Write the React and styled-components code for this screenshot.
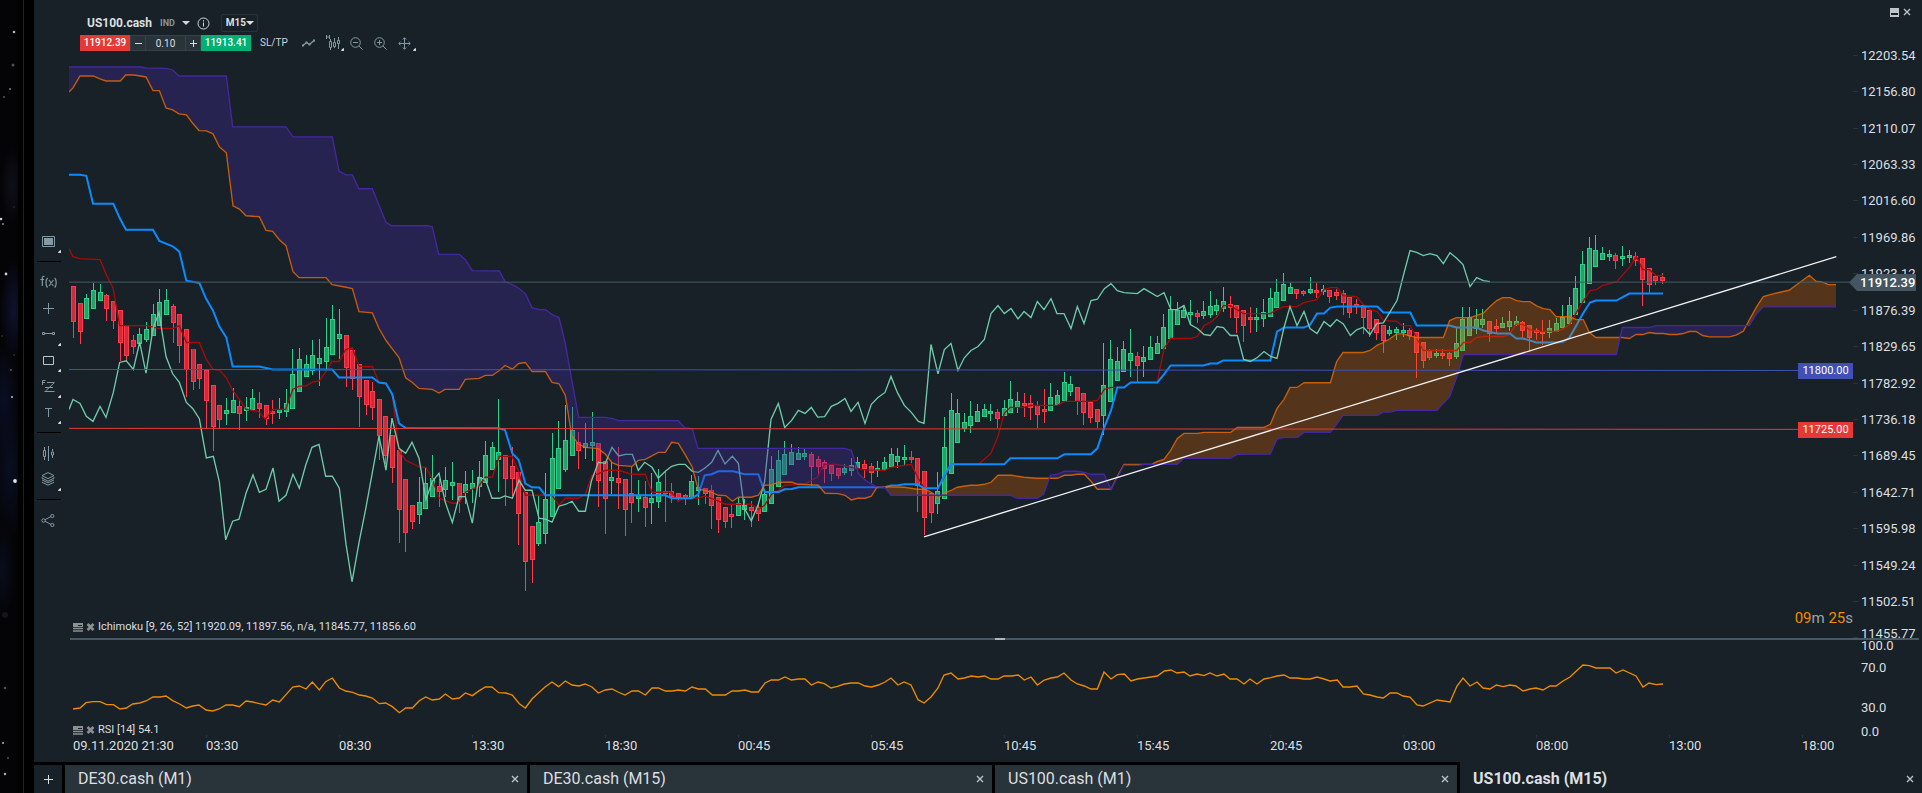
import React, { useState } from 'react'
import styled, { createGlobalStyle, css } from 'styled-components'

const colors = {
  panel: '#182127',
  tab: '#29333a',
  line: '#455a64',
  icon: '#8499a4',
  text: '#dcdfe1',
  red: '#e53935',
  green: '#00b074',
  blue: '#3f51b5',
  orange: '#ef8b00',
  up: '#2dcf8a',
  upFill: '#26a269',
  down: '#ff3b4b',
  downFill: '#cf2b3c',
  spanA: '#ef6c00',
  spanB: '#4527a0',
}

const GlobalStyle = createGlobalStyle`
  *, *::before, *::after {
    box-sizing: border-box;
  }
  body {
    margin: 0;
    background: #000;
    color: ${colors.text};
    font-family: Roboto, 'Liberation Sans', sans-serif;
    font-size: 13px;
    overflow: hidden;
  }
  button, input, select {
    font-family: inherit;
    margin: 0;
    padding: 0;
    border: 0;
    border-radius: 0;
    background: none;
    color: inherit;
  }
  button {
    cursor: pointer;
  }
  svg {
    display: block;
  }
`

/* ---------- chart data ---------- */

// Chart units: three per pixel, the x of the first bar is 219.
const LEFT = 207
const WIDTH = 5352
const PRICE_TOP = -480
const PRICE_HEIGHT = 1737
const RSI_HEIGHT = 294
const BARS_PER_LABEL = 399

// direction, high, body top, body bottom, low
const candles = `
d 198 198 306 356|d 250 250 336 374|u 222 234 297 297|u 189 210 267 267|u 192 216 243 243|d 222 225 267 305
d 243 243 303 329|d 270 270 369 425|d 315 315 411 425|d 345 360 381 404|u 324 342 372 372|u 306 327 360 366
u 252 282 348 348|u 207 246 318 318|u 207 240 285 285|d 252 258 309 369|d 282 282 378 430|d 327 327 453 533
d 387 387 489 513|d 435 435 480 510|d 453 453 546 628|d 498 498 624 696|d 558 558 603 628|u 537 573 585 617
u 507 543 582 582|d 543 561 585 633|u 534 564 576 605|u 510 537 573 573|d 519 552 570 597|d 558 558 600 617
d 543 576 585 614|u 537 570 582 600|u 510 552 579 594|u 390 465 570 570|u 384 420 519 519|u 408 435 474 474
u 360 408 456 468|u 357 417 435 500|u 294 381 429 456|u 255 297 408 408|u 267 342 357 420|d 345 345 447 504
d 393 393 480 513|d 435 435 534 624|d 483 483 558 588|d 489 516 567 602|d 540 540 651 723|d 591 591 711 735
d 648 648 747 792|d 693 693 873 971|d 780 780 942 998|d 858 858 909 930|u 774 849 888 915|u 746 792 870 870
u 708 777 834 834|d 780 801 819 864|u 744 783 813 833|u 729 789 801 842|d 792 792 843 882|u 756 795 822 855
u 753 792 810 852|u 726 774 804 834|u 666 708 792 792|u 669 684 753 753|u 540 699 723 819|d 708 708 780 860
d 684 741 780 831|d 759 759 885 978|d 819 819 1029 1116|d 921 921 1023 1092|u 828 909 975 981|u 762 840 945 975
u 642 717 894 894|u 606 687 810 810|u 558 663 753 758|u 564 633 711 711|d 639 669 696 750|u 612 672 687 720
u 579 669 681 726|d 672 672 786 864|d 726 726 840 945|u 729 774 786 825|d 684 777 792 870|d 780 780 873 951
d 744 822 852 912|u 783 828 840 879|d 786 834 867 924|u 762 837 852 915|u 750 789 849 866|d 759 816 825 909
d 792 816 834 852|d 822 822 837 849|d 825 828 837 858|u 768 786 837 837|u 771 804 816 858|d 807 807 825 855
d 798 813 861 930|d 834 834 903 942|d 864 864 909 927|d 858 885 894 927|u 837 852 891 891|u 840 858 873 903
d 846 864 876 924|d 852 864 885 906|u 810 825 879 879|u 711 750 855 855|u 693 723 804 804|u 666 705 768 768
u 675 699 738 738|u 684 702 723 723|u 687 702 714 723|d 699 705 744 801|d 711 720 744 771|d 723 729 750 792
d 738 738 765 786|d 747 747 771 780|u 735 747 762 768|u 717 738 756 771|u 714 729 750 750|d 723 735 750 777
d 732 741 762 792|u 726 747 756 774|u 714 729 753 753|u 687 705 744 744|u 687 711 729 747|u 678 714 723 738
d 696 714 723 732|d 717 717 801 879|d 756 756 897 948|d 822 822 882 912|u 759 816 855 885|u 594 684 840 840
u 522 573 765 765|u 540 582 672 672|u 582 609 630 639|u 546 591 621 642|u 555 576 609 609|u 555 570 594 594
u 555 576 585 606|d 570 579 600 627|u 543 567 591 591|u 486 540 582 582|u 519 546 564 582|d 522 552 561 594
d 528 552 567 603|d 546 558 588 627|d 510 570 579 612|u 492 534 576 576|u 513 528 558 558|u 459 489 546 546
u 471 495 519 531|d 504 504 549 588|d 522 522 582 618|d 549 549 597 612|d 570 570 609 627|u 369 498 591 648
u 360 420 549 549|u 381 426 486 486|u 363 390 459 459|u 327 402 426 474|d 399 411 441 489|u 378 414 429 474
u 348 381 423 423|u 348 369 405 405|u 282 321 390 390|u 228 267 357 357|u 246 270 315 315|u 255 270 294 294
u 240 276 285 315|d 270 279 291 309|u 243 273 288 297|u 213 258 285 294|u 237 255 273 285|u 201 243 267 276
d 228 252 264 294|d 255 255 294 340|d 270 270 318 366|d 261 291 300 340|u 264 291 300 336|u 237 276 297 321
u 204 234 291 291|u 177 216 264 264|u 159 192 243 243|u 189 201 222 222|d 207 207 222 237|d 210 213 222 228
u 171 207 219 222|d 189 210 219 234|u 195 207 216 225|d 210 210 231 249|d 207 216 228 240|d 210 219 249 285
d 231 231 279 294|d 237 252 261 282|d 255 255 294 342|d 270 270 327 351|d 297 297 339 360|d 315 315 363 402
u 318 330 342 348|u 321 327 339 360|u 309 330 339 351|d 324 330 348 360|d 336 336 402 477|d 366 366 426 447
d 387 393 417 423|u 387 402 411 417|d 390 402 411 420|d 399 402 420 441|u 324 369 414 420|u 261 297 396 396
u 261 291 348 348|u 267 297 327 342|u 267 297 315 324|d 303 303 342 366|d 297 318 327 339|u 291 309 324 324
u 273 303 321 333|u 288 303 315 318|d 303 306 333 354|d 315 315 354 399|d 324 330 339 360|d 300 333 342 375
u 300 324 339 354|u 294 309 336 336|u 255 291 324 324|u 231 255 312 312|u 168 204 285 285|u 93 132 249 249
u 51 84 192 192|u 45 90 141 141|u 81 99 120 120|u 90 102 111 123|d 99 105 123 147|u 78 108 117 138
u 90 105 114 129|d 96 108 123 138|d 114 114 180 258|d 144 144 195 219|d 165 168 183 195|d 159 171 183 192
`
  .trim()
  .split(/[|\n]/)
  .map((row, i) => {
    const [dir, ...rest] = row.split(' ')
    const [high, top, bottom, low] = rest.map(Number)
    return { dir, high, top, bottom, low, x: Math.round(73 + 6.648 * i) * 3 }
  })

const spanA =
  '207,-384 219,-396 240,-432 280,-432 300,-423 318,-417 361,-417 377,-435 402,-435 438,-429 459,-388 478,-388 498,-336 518,-330 537,-318 559,-315 578,-290 597,-268 619,-267 639,-258 658,-219 679,-201 699,-42 718,-32 738,-12 778,-9 798,32 818,35 838,60 858,78 879,156 897,174 978,174 996,195 1038,203 1057,207 1077,276 1117,280 1137,327 1158,363 1177,388 1197,414 1217,475 1237,489 1257,507 1297,510 1317,521 1335,510 1378,510 1396,480 1438,477 1456,468 1477,468 1498,453 1515,438 1537,449 1556,432 1576,429 1596,456 1636,456 1656,489 1677,493 1696,528 1715,648 1736,675 1756,684 1795,688 1816,704 1836,730 1856,738 1897,741 1915,723 1936,720 1975,699 1996,699 2015,669 2035,672 2055,705 2077,744 2094,810 2114,813 2135,819 2155,828 2177,829 2197,846 2215,834 2254,834 2275,828 2294,798 2315,797 2336,789 2375,789 2395,795 2455,798 2475,822 2515,823 2535,828 2554,842 2573,837 2596,837 2614,831 2632,802 2713,804 2752,810 2773,810 2794,819 2814,837 2833,822 2854,813 2872,804 2911,798 2932,798 2953,795 2973,789 2994,768 3035,768 3072,774 3112,777 3172,777 3193,768 3213,768 3232,765 3253,765 3273,786 3292,810 3333,810 3352,771 3372,735 3455,735 3472,726 3492,720 3512,693 3532,657 3552,642 3592,642 3612,639 3692,639 3712,624 3792,624 3811,615 3831,567 3852,540 3870,504 3891,504 3912,490 3991,490 4010,426 4029,399 4090,399 4110,393 4132,377 4150,369 4171,357 4190,343 4211,343 4230,350 4250,354 4330,354 4349,303 4369,294 4410,294 4450,281 4470,261 4490,243 4508,234 4530,234 4550,243 4569,246 4590,246 4610,259 4630,267 4650,270 4668,291 4709,291 4729,300 4750,300 4768,339 4788,354 4867,354 4888,357 4908,345 4928,345 4948,339 4968,342 4990,342 5008,345 5030,345 5050,342 5068,336 5088,336 5108,348 5128,352 5188,352 5208,347 5230,335 5250,297 5270,261 5290,231 5310,225 5340,218 5367,212 5397,190 5428,167 5448,185 5466,187 5485,195 5508,195'

const spanB =
  '207,-459 423,-459 438,-456 500,-455 518,-450 537,-432 679,-432 698,-279 858,-279 879,-249 997,-249 1017,-146 1038,-135 1057,-135 1077,-93 1117,-93 1158,8 1175,18 1282,18 1297,21 1316,104 1378,104 1396,120 1417,153 1498,154 1515,186 1537,195 1556,206 1576,222 1596,264 1618,270 1636,270 1657,285 1677,294 1696,372 1715,480 1736,594 1816,594 1836,597 1856,604 2035,604 2055,626 2077,628 2094,687 2533,687 2554,693 2575,762 2596,783 2628,802 2654,804 2673,828 3030,828 3052,837 3112,837 3131,825 3151,768 3172,765 3193,756 3232,756 3253,759 3273,765 3312,765 3333,810 3372,738 3415,738 3433,735 3532,735 3552,717 3692,717 3712,705 3811,704 3831,660 3853,654 3893,654 3912,639 3991,639 4010,615 4029,588 4132,588 4150,578 4171,578 4190,573 4311,573 4349,531 4370,474 4390,405 4849,405 4867,324 4948,324 4968,318 5248,318 5268,285 5290,262 5508,262'

const kijun =
  '207,-135 240,-135 259,-132 279,-48 340,-48 359,-5 378,30 459,30 478,64 518,80 538,96 559,183 598,190 618,237 639,273 658,321 679,354 698,441 778,441 818,450 996,450 1017,474 1117,474 1137,489 1158,492 1177,525 1197,612 1217,626 1496,627 1515,632 1537,702 1556,722 1576,793 1596,804 1618,805 1636,828 1996,828 2015,837 2075,837 2095,825 2114,768 2135,765 2155,756 2200,756 2233,765 2275,765 2294,818 2336,818 2354,810 2375,809 2395,804 2655,804 2673,799 2695,798 2713,795 2752,795 2773,807 2814,807 2833,768 2854,735 3013,735 3031,717 3172,717 3193,705 3273,705 3292,687 3313,624 3333,573 3352,504 3372,504 3392,489 3472,489 3492,465 3512,438 3610,438 3631,432 3652,432 3670,423 3811,423 3831,336 3852,324 3912,324 3931,315 3951,282 3972,282 3991,264 4012,261 4132,261 4150,279 4231,279 4250,318 4349,318 4370,324 4429,324 4450,333 4490,342 4530,342 4549,357 4569,357 4609,369 4670,369 4690,366 4708,355 4729,318 4749,282 4770,249 4788,243 4849,243 4888,222 4989,222'

const tenkan =
  '207,87 219,111 240,117 300,120 320,168 339,204 359,318 440,318 478,327 518,327 538,318 559,369 598,369 619,420 639,450 658,452 679,475 698,513 718,540 738,570 775,576 797,600 818,570 857,570 878,510 898,500 917,500 937,488 958,484 978,456 996,426 1017,426 1037,390 1057,385 1077,440 1117,441 1137,489 1158,492 1177,525 1197,693 1217,723 1257,743 1278,744 1297,780 1317,837 1357,852 1378,852 1396,819 1436,801 1456,774 1477,774 1498,711 1536,711 1556,756 1576,828 1656,828 1677,858 1696,837 1736,837 1756,825 1776,768 1795,764 1816,753 1856,753 1895,765 1936,765 1956,819 2015,819 2035,846 2055,835 2095,837 2114,830 2155,846 2177,855 2254,855 2275,870 2294,858 2315,825 2336,813 2354,798 2413,795 2452,774 2473,735 2512,735 2554,744 2596,752 2655,753 2673,744 2734,735 2753,774 2773,807 2814,807 2854,735 2935,735 2953,720 2973,702 2994,651 3013,582 3031,564 3073,564 3091,558 3172,558 3193,546 3273,546 3292,543 3313,510 3333,504 3372,504 3392,489 3472,489 3492,387 3512,357 3572,357 3592,351 3612,318 3631,309 3652,291 3670,258 3691,258 3730,282 3811,282 3831,270 3852,261 3891,261 3912,249 3951,240 3972,210 3991,204 4012,204 4030,228 4070,231 4090,255 4111,270 4132,276 4150,303 4189,305 4208,318 4231,318 4249,354 4270,393 4370,393 4390,369 4410,369 4429,354 4450,351 4510,351 4528,345 4549,313 4570,315 4588,330 4609,335 4670,336 4690,328 4709,315 4729,279 4749,246 4770,213 4789,210 4807,198 4850,186 4888,144 4909,111 4928,150 4948,150 4969,168 4989,168'

const chikou =
  '207,570 219,540 240,552 259,591 279,606 300,561 318,594 340,519 359,429 379,424 400,450 419,368 438,461 459,327 477,279 498,411 518,463 538,489 559,549 578,567 598,598 619,716 640,711 658,788 677,962 698,906 717,900 738,822 759,767 778,819 798,810 819,746 837,846 858,828 879,765 898,807 917,738 936,684 957,675 977,771 997,771 1018,807 1038,975 1056,1088 1078,965 1097,870 1117,760 1137,650 1158,753 1176,596 1197,687 1217,702 1236,669 1257,717 1278,840 1297,786 1317,762 1336,850 1357,910 1377,832 1396,832 1417,912 1436,774 1456,780 1476,837 1498,837 1515,830 1537,837 1557,783 1576,813 1596,813 1617,897 1636,900 1656,909 1677,861 1698,855 1716,846 1736,876 1756,876 1774,786 1795,729 1816,732 1836,684 1856,710 1876,705 1897,705 1915,753 1934,729 1956,744 1975,777 1996,756 2015,741 2035,735 2055,735 2077,756 2095,759 2114,747 2135,729 2154,693 2175,734 2197,711 2215,732 2233,867 2254,905 2275,855 2294,786 2313,600 2335,552 2354,624 2375,603 2395,573 2415,582 2434,564 2453,593 2474,592 2494,561 2514,552 2535,537 2553,576 2574,549 2595,612 2614,555 2634,534 2655,519 2673,471 2692,519 2713,558 2734,579 2755,606 2772,612 2793,375 2814,463 2833,390 2853,372 2874,453 2893,415 2913,393 2934,381 2953,360 2973,282 2994,258 3013,282 3033,267 3054,298 3072,276 3093,294 3112,246 3132,270 3153,237 3171,282 3192,282 3213,327 3232,261 3252,312 3273,243 3292,239 3313,207 3333,192 3352,213 3372,219 3412,222 3432,207 3472,231 3492,219 3513,270 3531,270 3552,258 3571,315 3592,327 3612,345 3631,348 3651,321 3670,324 3691,348 3712,348 3731,420 3751,426 3772,414 3792,396 3812,411 3831,417 3852,324 3870,261 3891,318 3912,276 3930,327 3951,342 3972,306 3991,321 4010,300 4030,313 4051,348 4070,331 4090,323 4110,345 4130,312 4150,310 4191,243 4210,168 4230,93 4250,98 4270,108 4290,102 4311,108 4330,132 4350,99 4370,116 4389,135 4410,201 4430,174 4450,183 4470,186'

const rsi =
  '219,207 240,204 258,188 279,185 300,185 320,194 340,194 360,207 379,204 398,192 419,189 438,183 459,171 480,171 498,168 518,182 539,192 559,204 578,198 597,195 618,210 638,213 657,207 678,195 698,195 718,200 738,183 758,186 778,191 798,195 818,180 838,186 858,164 878,141 898,138 918,147 937,126 958,150 977,125 997,114 1018,144 1037,153 1058,157 1078,165 1097,168 1117,174 1138,191 1157,189 1177,200 1198,218 1217,204 1237,204 1258,182 1277,171 1297,180 1318,177 1336,162 1357,177 1378,174 1396,159 1417,167 1438,152 1456,141 1476,141 1496,158 1518,159 1537,165 1558,191 1576,204 1596,177 1616,158 1636,140 1656,126 1676,140 1696,123 1716,135 1737,138 1755,132 1776,141 1795,159 1816,150 1836,147 1854,156 1875,165 1896,153 1915,153 1936,165 1956,144 1975,144 1996,153 2017,153 2035,150 2056,153 2076,141 2095,147 2116,147 2137,165 2176,165 2196,153 2215,153 2235,150 2254,156 2275,156 2295,129 2314,120 2335,120 2355,111 2374,120 2395,117 2415,117 2434,135 2454,126 2473,131 2493,144 2512,139 2533,132 2554,129 2575,129 2595,138 2614,141 2635,135 2655,126 2673,114 2694,135 2712,126 2733,135 2754,179 2772,189 2793,171 2814,144 2832,105 2853,99 2874,117 2893,114 2914,108 2934,111 2954,108 2973,117 2994,117 3012,108 3034,108 3055,105 3073,120 3093,111 3112,135 3133,120 3153,114 3172,111 3192,99 3213,120 3232,132 3253,138 3273,147 3292,147 3312,96 3333,117 3352,104 3373,102 3393,123 3412,117 3433,114 3472,108 3493,93 3513,90 3531,99 3552,96 3570,108 3591,102 3612,107 3630,99 3651,108 3672,102 3690,117 3711,117 3732,132 3750,117 3771,132 3792,117 3813,113 3831,108 3852,105 3870,114 3891,114 3912,117 3931,117 3951,111 3972,117 3990,123 4012,120 4029,141 4050,141 4071,138 4090,162 4110,165 4131,171 4150,174 4170,159 4191,159 4209,168 4230,171 4251,195 4269,198 4311,180 4350,186 4371,138 4389,114 4410,138 4431,126 4449,144 4470,147 4489,135 4509,140 4530,135 4548,138 4569,153 4590,147 4608,144 4629,150 4650,138 4668,138 4689,123 4710,111 4729,93 4749,75 4768,77 4788,84 4830,84 4848,99 4869,90 4908,108 4929,141 4947,129 4968,134 4989,132'

const prices = [
  '12203.54', '12156.80', '12110.07', '12063.33', '12016.60', '11969.86',
  '11923.12', '11876.39', '11829.65', '11782.92', '11736.18', '11689.45',
  '11642.71', '11595.98', '11549.24', '11502.51', '11455.77',
]

const times = [
  '09.11.2020 21:30', '03:30', '08:30', '13:30', '18:30', '00:45', '05:45',
  '10:45', '15:45', '20:45', '03:00', '08:00', '13:00', '18:00',
]

const tabs = ['DE30.cash (M1)', 'DE30.cash (M15)', 'US100.cash (M1)', 'US100.cash (M15)']

const stars = [
  [14, 32, 1.3, 0.8], [13, 65, 1.5, 0.35], [10, 89, 0.9, 0.6], [4, 97, 0.9, 0.4],
  [1, 219, 1.3, 0.9], [3, 224, 1, 0.6], [14, 207, 0.8, 0.2], [6, 274, 1.4, 0.9],
  [11, 370, 0.9, 0.4], [12, 397, 1.1, 0.8], [15, 481, 1.9, 1],
  [5, 615, 3, 0.08], [5, 688, 1.2, 0.35], [3, 743, 1, 0.8], [8, 758, 0.9, 0.4],
  [5, 774, 1.2, 0.8], [14, 355, 0.8, 0.3], [2, 336, 0.8, 0.3],
]

/* ---------- page frame ---------- */

const Page = styled.div`
  display: flex;
  height: 100vh;
`

const Sky = styled.div`
  flex: 0 0 18px;
  overflow: hidden;
  background:
    radial-gradient(14px 50px at 14px 310px, #101230, transparent),
    radial-gradient(16px 60px at 4px 400px, #0a0e24, transparent),
    radial-gradient(18px 70px at 10px 470px, #090e22, transparent),
    radial-gradient(12px 40px at 12px 185px, #0f0f1a, transparent),
    radial-gradient(14px 50px at 2px 570px, #090d1c, transparent),
    #040406;
`

const Edge = styled.div`
  flex: 0 0 16px;
  padding-left: 5px;
  background: #000;

  &::before {
    content: '';
    display: block;
    width: 1px;
    height: 100%;
    background: #202020;
  }
`

const Terminal = styled.main`
  flex: 1;
  min-width: 0;
  display: flex;
  flex-direction: column;
`

const Body = styled.div`
  flex: 1;
  min-height: 0;
  display: flex;
  background: ${colors.panel};
`

/* ---------- drawing tools ---------- */

const Rail = styled.nav`
  flex: 0 0 35px;
  display: flex;
  flex-direction: column;
  justify-content: center;
  padding-bottom: 1px;
  color: ${colors.icon};
`

const corner = css`
  &::after {
    content: '';
    position: absolute;
    right: 1px;
    bottom: 1px;
    border: 1px solid #cfd8dc;
    border-width: 1px 2px 2px 1px;
    border-color: transparent #cfd8dc #cfd8dc transparent;
  }
`

const Tool = styled.button`
  position: relative;
  display: flex;
  align-items: center;
  justify-content: center;
  width: 28px;
  height: 26px;
  color: inherit;
  ${(props) => props.$menu && corner}
`

const RailDivider = styled.hr`
  width: 24px;
  height: 1px;
  margin: 7px 3px;
  border: 0;
  background: #000;
`

/* ---------- chart ---------- */

const Workspace = styled.div`
  flex: 1;
  min-width: 0;
  display: flex;
  flex-direction: column;
`

const PricePane = styled.section`
  flex: 1;
  min-height: 0;
  display: flex;
`

const PlotColumn = styled.div`
  flex: 1;
  min-width: 0;
  display: flex;
  flex-direction: column;
`

const Header = styled.header`
  flex: 0 0 60px;
  display: flex;
  flex-direction: column;
  gap: 3px;
  padding: 14px 0 0 11px;
`

const TitleRow = styled.div`
  display: flex;
  align-items: center;
  height: 18px;
  padding-left: 7px;
`

const Symbol = styled.h1`
  margin: 0;
  font-size: 12px;
  font-weight: 700;
`

const Market = styled.span`
  margin-left: 8px;
  font-size: 9px;
  font-weight: 700;
  color: #87949b;
`

const SmallButton = styled.button`
  display: flex;
  margin-left: 7px;
  color: #cfd8dc;
`

const Interval = styled.label`
  display: flex;
  align-items: center;
  height: 18px;
  margin-left: 11px;
  padding: 0 3px 0 4px;
  border: 1px solid ${colors.tab};
  border-radius: 2px;

  select {
    appearance: none;
    width: 20px;
    font-size: 10px;
    font-weight: 700;
    line-height: 16px;
  }
`

const OrderRow = styled.div`
  display: flex;
  align-items: center;
  height: 16px;
`

const PriceButton = styled.button`
  width: 50px;
  height: 16px;
  background: ${(props) => props.$color};
  color: #fff;
  font-size: 10px;
  font-weight: 500;
  line-height: 16px;
`

const Volume = styled.div`
  display: flex;
  height: 16px;
  border: 1px solid #36424a;
  background: ${colors.tab};

  button {
    width: 14px;
    display: flex;
    align-items: center;
    justify-content: center;
  }

  input {
    width: 41px;
    border: solid #36424a;
    border-width: 0 1px;
    font-size: 10px;
    text-align: center;
    outline: none;
  }
`

const StopButton = styled.button`
  margin: 0 9px;
  font-size: 10px;
  line-height: 16px;
  color: #cfd4d7;
`

const ChartTools = styled.div`
  display: flex;
  align-items: center;
  color: ${colors.icon};
`

const ChartTool = styled(Tool)`
  width: 24px;
  height: 18px;
`

const Plot = styled.div`
  position: relative;
  flex: 1;
  min-height: 0;

  > svg {
    width: 100%;
    height: 100%;
  }
`

const Legend = styled.div`
  position: absolute;
  left: 4px;
  bottom: ${(props) => props.$bottom}px;
  display: flex;
  align-items: center;
  font-size: 11px;
  line-height: 12px;

  button {
    display: flex;
    margin-right: 3px;
    color: #8b9092;
  }
`

const LevelTag = styled.span`
  position: absolute;
  right: 0;
  top: ${(props) => props.$top}%;
  width: 55px;
  height: 16px;
  margin-top: -8px;
  background: ${(props) => props.$color};
  color: #fff;
  font-size: 11px;
  line-height: 16px;
  text-align: center;
`

const CurrentTag = styled.span`
  position: absolute;
  left: 100%;
  top: ${(props) => props.$top}%;
  z-index: 1;
  width: 67px;
  height: 17px;
  margin: -9px 0 0 -4px;
  padding-left: 11px;
  clip-path: polygon(0 50%, 8px 0, 100% 0, 100% 100%, 8px 100%);
  background: #455660;
  color: #fff;
  font-weight: 500;
  line-height: 18px;
`

const Countdown = styled.span`
  position: absolute;
  right: 0;
  bottom: 12px;
  font-size: 15px;
  line-height: 16px;
  color: #9aa5ab;

  b {
    font-weight: 400;
    color: #f58a00;
  }
`

const PriceAxis = styled.aside`
  flex: 0 0 69px;
  display: flex;
  flex-direction: column;
`

const WindowControls = styled.div`
  flex: 0 0 37px;
  display: flex;
  align-items: flex-start;
  justify-content: flex-end;
  gap: 4px;
  padding: 8px 11px 0 0;
  color: #bfc6ca;
`

const AxisList = styled.ul`
  flex: 1;
  min-height: 0;
  display: flex;
  flex-direction: column;
  margin: 0;
  padding: 0;
  list-style: none;
`

const AxisLabel = styled.li`
  flex: 2 1 0;
  display: flex;
  align-items: center;
  gap: 3px;

  &::before {
    content: '';
    width: 5px;
    height: 1px;
    background: ${colors.tab};
  }

  &:last-child {
    flex-grow: 1;
    align-items: flex-end;
    line-height: 8px;
  }
`

const Splitter = styled.div`
  flex: 0 0 1px;
  display: flex;
  justify-content: center;
  margin: 0 3px 0 1px;
  padding-left: 11px;
  background: ${colors.line};

  &::before {
    content: '';
    width: 10px;
    height: 2px;
    background: #b0b6b9;
    z-index: 1;
  }
`

const RsiPane = styled.section`
  flex: 0 0 98px;
  display: flex;
`

const RsiAxis = styled.ul`
  flex: 0 0 69px;
  display: grid;
  grid-template-rows: 22fr 40fr 24fr 12fr;
  margin: 0;
  padding: 0 0 0 8px;
  list-style: none;
  line-height: 12px;
`

const TimeAxis = styled.div`
  flex: 0 0 24px;
  display: flex;
  margin-right: 69px;
  line-height: 16px;
  white-space: nowrap;
`

const TimeLabel = styled.span`
  flex: 0 0 ${(BARS_PER_LABEL / WIDTH) * 100}%;
  width: 0;
  padding-left: 4px;
`

/* ---------- tabs ---------- */

const TabBar = styled.nav`
  flex: 0 0 31px;
  display: flex;
  gap: 3px;
  background: #000;
`

const AddTab = styled.button`
  display: flex;
  align-items: center;
  justify-content: center;
  width: 28px;
  margin-top: 3px;
  background: ${colors.panel};
`

const Tab = styled.div`
  flex: 1 1 0;
  display: flex;
  justify-content: space-between;
  margin-top: ${(props) => (props.$active ? 0 : 3)}px;
  padding: ${(props) => (props.$active ? 3 : 0)}px 8px 0 13px;
  background: ${(props) => (props.$active ? colors.panel : colors.tab)};

  button {
    height: 27px;
    font-size: 16px;
    font-weight: ${(props) => (props.$active ? 700 : 400)};
    color: ${colors.text};
  }

  button:last-child {
    display: flex;
    align-items: center;
    color: #bfc6ca;
  }
`

/* ---------- icons ---------- */

const Icon = ({ w = 14, h = 14, children }) => (
  <svg width={w} height={h} viewBox={`0 0 ${w} ${h}`} fill="none" stroke="currentColor" aria-hidden="true">
    {children}
  </svg>
)

const Caret = () => (
  <Icon w={8} h={4}>
    <path d="M0 0h8l-4 4z" fill="currentColor" stroke="none" />
  </Icon>
)

const Cross = () => (
  <Icon w={8} h={8}>
    <path d="M1 1l6 6M7 1l-6 6" strokeWidth="1.3" />
  </Icon>
)

const Plus = ({ size = 9 }) => (
  <Icon w={size} h={size}>
    <path d={`M${size / 2} 0v${size}M0 ${size / 2}h${size}`} />
  </Icon>
)

const Magnifier = ({ plus }) => (
  <Icon w={13} h={13}>
    <circle cx="5.5" cy="5.5" r="4.8" />
    <path d={plus ? 'M9 9l3.6 3.6M3 5.5h5M5.5 3v5' : 'M9 9l3.6 3.6M3 5.5h5'} />
  </Icon>
)

const SettingsIcon = () => (
  <Icon w={10} h={9}>
    <path d="M0 5.5h10M0 8h10" strokeWidth="1.4" />
    <path d="M0 0h10v4H0z" fill="currentColor" stroke="none" />
    <path d="M5 2.5h4" stroke={colors.panel} />
  </Icon>
)

const RemoveIcon = () => (
  <Icon w={9} h={8}>
    <path d="M1.5 1l6 6M7.5 1l-6 6" strokeWidth="2.6" />
  </Icon>
)

const railGroups = [
  [
    {
      name: 'Chart window',
      menu: true,
      icon: (
        <Icon w={13} h={11}>
          <path d="M.5.5h12v10H.5z" />
          <path d="M2 2h9v7H2z" fill="currentColor" stroke="none" />
        </Icon>
      ),
    },
  ],
  [
    {
      name: 'Indicators',
      icon: (
        <Icon w={17} h={14}>
          <path
            d="M4.4 1.6C2.9 1 2.3 1.9 2.3 3v8M.3 4.5h3.8M7.5 2.8c-2 2.4-2 7.4 0 9.8M14.7 2.8c2 2.4 2 7.4 0 9.8M9 5l4.4 6M13.4 5L9 11"
            strokeWidth="1.2"
          />
        </Icon>
      ),
    },
    {
      name: 'Crosshair',
      icon: (
        <Icon w={11} h={11}>
          <path d="M5.5 0v11M0 5.5h11" />
        </Icon>
      ),
    },
    {
      name: 'Lines',
      menu: true,
      icon: (
        <Icon w={13} h={4}>
          <path d="M.5.5h2v2h-2zM10.5.5h2v2h-2zM3 1.5h7" />
        </Icon>
      ),
    },
    {
      name: 'Shapes',
      menu: true,
      icon: (
        <Icon w={11} h={9}>
          <path d="M.5.5h10v8H.5z" stroke="#b4c6ce" />
        </Icon>
      ),
    },
    {
      name: 'Fibonacci',
      menu: true,
      icon: (
        <Icon w={13} h={12}>
          <path d="M.5 5V.5h3M.5 2.5H3M5 2.5h7.5M3 7.5h8M2.500 11.500h10M3.500 11L12 3" />
        </Icon>
      ),
    },
    {
      name: 'Text',
      menu: true,
      icon: (
        <Icon w={7} h={9}>
          <path d="M0 .5h7M3.5 0v9" />
        </Icon>
      ),
    },
  ],
  [
    {
      name: 'Chart type',
      icon: (
        <Icon w={12} h={15}>
          <path d="M6.5 0v15M2.5 1v3M2.5 11v3M1.5 4.5h2v6h-2zM10.5 3v2.500M10.5 9v3M9.5 6h2v3h-2z" />
        </Icon>
      ),
    },
    {
      name: 'Layers',
      menu: true,
      icon: (
        <Icon w={14} h={14}>
          <path d="M7 .6l6 3-6 3-6-3zM1 6.100l6 3 6-3M1 7.900l6 3 6-3M1 10.200l6 3 6-3M1 5.200v1M13 5.200v1" />
        </Icon>
      ),
    },
  ],
  [
    {
      name: 'Share',
      icon: (
        <Icon w={14} h={13}>
          <circle cx="2.5" cy="6.5" r="1.7" />
          <circle cx="11.3" cy="2" r="1.6" />
          <circle cx="11.3" cy="11" r="1.6" />
          <path d="M4 5.7l5.8-3M4 7.3l5.8 3" />
        </Icon>
      ),
    },
  ],
]

const chartTools = [
  {
    name: 'Line chart',
    icon: (
      <Icon w={13} h={8}>
        <path d="M1 6.5l3.500-3 3 2L12 1.500" strokeWidth="1.3" />
        <path
          d="M0 5.500h2v2H0zM3.500 2.500h2v2h-2zM6.500 4.500h2v2h-2zM11 .500h2v2h-2z"
          fill="currentColor"
          stroke="none"
        />
      </Icon>
    ),
  },
  {
    name: 'Candle chart',
    menu: true,
    icon: (
      <Icon w={14} h={16}>
        <path d="M.5 0v4M3.5 0v4M.5 2h3M4.5 4v2M4.5 13v2M3.5 6.5h2v6h-2zM8.5 3v4M8.5 11v2M7.5 7.5h2v4h-2zM12.5 2v3M12.5 9v5M11.5 5.5h2v3h-2z" />
      </Icon>
    ),
  },
  { name: 'Zoom out', icon: <Magnifier /> },
  { name: 'Zoom in', icon: <Magnifier plus /> },
  {
    name: 'Move',
    menu: true,
    icon: (
      <Icon w={13} h={13}>
        <path d="M6.5 1v11M1 6.5h11M4.8 2.500l1.700-1.800 1.700 1.800M4.800 10.500l1.700 1.800 1.700-1.800M2.500 4.800L.7 6.500l1.800 1.700M10.500 4.800l1.800 1.700-1.800 1.700" />
      </Icon>
    ),
  },
]

/* ---------- parts ---------- */

const Candle = ({ dir, high, top, bottom, low, x }) => (
  <g shapeRendering="crispEdges">
    <rect x={x} y={high} width="3" height={low - high} fill={colors[dir === 'u' ? 'up' : 'down']} />
    <rect x={x - 6} y={top} width="15" height={bottom - top} fill={colors[dir === 'u' ? 'up' : 'down']} />
    <rect x={x - 3} y={top + 3} width="9" height={bottom - top - 6} fill={colors[dir === 'u' ? 'upFill' : 'downFill']} />
  </g>
)

const PriceChart = () => (
  <svg
    viewBox={`${LEFT} ${PRICE_TOP} ${WIDTH} ${PRICE_HEIGHT}`}
    preserveAspectRatio="none"
    fill="none"
    strokeWidth="3"
    role="img"
    aria-label="US100.cash price chart"
  >
    <clipPath id="belowA">
      <polygon points={`${spanA} 5508,1300 207,1300`} />
    </clipPath>
    <clipPath id="belowB">
      <polygon points={`${spanB} 5508,1300 207,1300`} />
    </clipPath>

    {candles.map((candle) => (
      <Candle key={candle.x} {...candle} />
    ))}
    <polyline points={tenkan} stroke="#a80a0a" strokeWidth="4" />
    <polyline points={kijun} stroke="#0a8cff" strokeWidth="6" />
    <polyline points={chikou} stroke="#6fcbab" strokeWidth="4" />

    {/* kumo: orange while span A is the upper edge, violet otherwise */}
    <polygon points={`${spanB} 5508,-660 207,-660`} clipPath="url(#belowA)" fill={colors.spanA} opacity="0.28" />
    <polygon points={`${spanA} 5508,-660 207,-660`} clipPath="url(#belowB)" fill={colors.spanB} opacity="0.35" />
    <polyline points={spanA} stroke={colors.spanA} strokeWidth="4" opacity="0.8" />
    <polyline points={spanB} stroke={colors.spanB} strokeWidth="4" />

    <path d="M207 187.500H5559" stroke={colors.line} />
    <path d="M207 450L5400 453" stroke={colors.blue} />
    <path d="M207 627L5400 630" stroke={colors.red} />
    <path d="M2772 953L5509 111" stroke="#f2f2f2" strokeWidth="4" />
  </svg>
)

const RsiChart = () => (
  <svg
    viewBox={`${LEFT} 0 ${WIDTH} ${RSI_HEIGHT}`}
    preserveAspectRatio="none"
    fill="none"
    strokeWidth="3"
    role="img"
    aria-label="RSI chart"
  >
    <polyline points={rsi} stroke={colors.orange} strokeWidth="4" />
    {times.map((time, i) => (
      <path key={time} d={`M${220.5 + i * BARS_PER_LABEL} 285v9`} stroke={colors.tab} />
    ))}
  </svg>
)

const ToolRail = () => (
  <Rail aria-label="Drawing tools">
    {railGroups.map((group, i) => (
      <React.Fragment key={group[0].name}>
        {i > 0 && <RailDivider />}
        {group.map((tool) => (
          <Tool key={tool.name} aria-label={tool.name} $menu={tool.menu}>
            {tool.icon}
          </Tool>
        ))}
      </React.Fragment>
    ))}
  </Rail>
)

const IndicatorLegend = ({ name, bottom, children }) => (
  <Legend $bottom={bottom}>
    <button aria-label={`${name} settings`}>
      <SettingsIcon />
    </button>
    <button aria-label={`Remove ${name}`}>
      <RemoveIcon />
    </button>
    {children}
  </Legend>
)

const ChartHeader = () => {
  const [volume, setVolume] = useState('0.10')
  const step = (by) => setVolume((v) => Math.max(0, Number(v) + by).toFixed(2))

  return (
    <Header>
      <TitleRow>
        <Symbol>US100.cash</Symbol>
        <Market>IND</Market>
        <SmallButton aria-label="Choose symbol">
          <Caret />
        </SmallButton>
        <SmallButton aria-label="Instrument details">
          <Icon w={13} h={13}>
            <circle cx="6.5" cy="6.5" r="5.5" />
            <path d="M6.5 5.5v4M6.5 3.2v1.3" />
          </Icon>
        </SmallButton>
        <Interval>
          <select aria-label="Interval" defaultValue="M15">
            <option>M15</option>
          </select>
          <Caret />
        </Interval>
      </TitleRow>
      <OrderRow>
        <PriceButton $color={colors.red}>11912.39</PriceButton>
        <Volume>
          <button aria-label="Less" onClick={() => step(-0.01)}>
            <Icon w={7} h={1}>
              <path d="M0 .5h7" />
            </Icon>
          </button>
          <input aria-label="Volume" value={volume} onChange={(e) => setVolume(e.target.value)} />
          <button aria-label="More" onClick={() => step(0.01)}>
            <Plus size={7} />
          </button>
        </Volume>
        <PriceButton $color={colors.green}>11913.41</PriceButton>
        <StopButton>SL/TP</StopButton>
        <ChartTools>
          {chartTools.map((tool) => (
            <ChartTool key={tool.name} aria-label={tool.name} $menu={tool.menu}>
              {tool.icon}
            </ChartTool>
          ))}
        </ChartTools>
      </OrderRow>
    </Header>
  )
}

const topOf = (y) => ((y - PRICE_TOP) / PRICE_HEIGHT) * 100

export default function App() {
  const [active, setActive] = useState(3)

  return (
    <Page>
      <GlobalStyle />
      <Sky>
        <svg width="18" height="793" aria-hidden="true">
          {stars.map(([x, y, r, o], i) => (
            <circle key={i} cx={x} cy={y} r={r} fill="#dde3ea" opacity={o} />
          ))}
        </svg>
      </Sky>
      <Edge />
      <Terminal>
        <Body>
          <ToolRail />
          <Workspace>
            <PricePane>
              <PlotColumn>
                <ChartHeader />
                <Plot>
                  <PriceChart />
                  <LevelTag $top={topOf(454)} $color={colors.blue}>11800.00</LevelTag>
                  <LevelTag $top={topOf(631)} $color={colors.red}>11725.00</LevelTag>
                  <CurrentTag $top={topOf(190)}>11912.39</CurrentTag>
                  <Countdown>
                    <b>09</b>m <b>25</b>s
                  </Countdown>
                  <IndicatorLegend name="Ichimoku" bottom={5}>
                    Ichimoku [9, 26, 52] 11920.09, 11897.56, n/a, 11845.77, 11856.60
                  </IndicatorLegend>
                </Plot>
              </PlotColumn>
              <PriceAxis>
                <WindowControls>
                  <button aria-label="Minimize">
                    <Icon w={9} h={9}>
                      <path d="M0 0h9v9H0zM1 5v2h7V5z" fill="currentColor" fillRule="evenodd" stroke="none" />
                    </Icon>
                  </button>
                  <button aria-label="Close">
                    <Cross />
                  </button>
                </WindowControls>
                <AxisList>
                  {prices.map((price) => (
                    <AxisLabel key={price}>{price}</AxisLabel>
                  ))}
                </AxisList>
              </PriceAxis>
            </PricePane>
            <Splitter />
            <RsiPane>
              <Plot>
                <RsiChart />
                <IndicatorLegend name="RSI" bottom={2}>
                  RSI [14] 54.1
                </IndicatorLegend>
              </Plot>
              <RsiAxis>
                <li>100.0</li>
                <li>70.0</li>
                <li>30.0</li>
                <li>0.0</li>
              </RsiAxis>
            </RsiPane>
            <TimeAxis>
              {times.map((time) => (
                <TimeLabel key={time}>{time}</TimeLabel>
              ))}
            </TimeAxis>
          </Workspace>
        </Body>
        <TabBar>
          <AddTab aria-label="New chart">
            <Plus />
          </AddTab>
          {tabs.map((tab, i) => (
            <Tab key={tab} $active={i === active}>
              <button onClick={() => setActive(i)}>{tab}</button>
              <button aria-label={`Close ${tab}`}>
                <Cross />
              </button>
            </Tab>
          ))}
        </TabBar>
      </Terminal>
    </Page>
  )
}
